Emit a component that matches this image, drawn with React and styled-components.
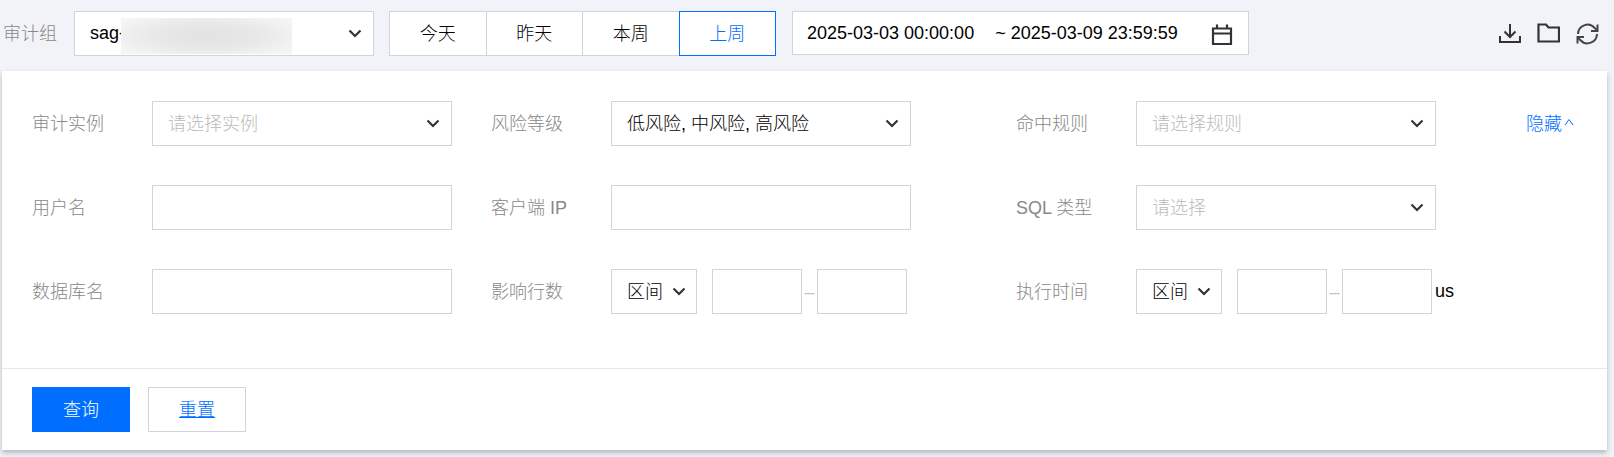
import React from 'react';
import styled, { createGlobalStyle } from 'styled-components';

const GlobalStyle = createGlobalStyle`
  html, body {
    margin: 0;
    background: #f2f3f8;
    font-family: "Liberation Sans", "Noto Sans CJK SC", sans-serif;
    font-size: 18px;
    color: #000;
  }
`;

const Page = styled.div`
  min-height: 100vh;
  padding-bottom: 7px;
  box-sizing: border-box;
  overflow: hidden;
`;

const TopBar = styled.div`
  display: flex;
  align-items: flex-start;
  height: 45px;
  padding: 11px 15px 15px 3px;
`;

const GroupLabel = styled.span`
  align-self: center;
  padding-bottom: 4px;
  color: #888;
  margin-right: 17px;
  font-weight: 300;
`;

const SelectBox = styled.div`
  position: relative;
  box-sizing: border-box;
  display: flex;
  align-items: center;
  justify-content: space-between;
  flex: none;
  width: ${p => p.$width}px;
  height: 45px;
  padding: 0 ${p => p.$pad || 11}px 0 15px;
  background: #fff;
  border: 1.5px solid #cfd5de;
  color: ${p => (p.$placeholder ? '#bbb' : '#000')};
  font-weight: 300;
`;

const SelectText = styled.span`
  padding-bottom: 4px;
`;

const Redaction = styled.span`
  position: absolute;
  left: 46px;
  top: 6px;
  width: 171px;
  height: 36px;
  background: radial-gradient(ellipse 60% 70% at 50% 50%, #e2e2e2 0%, #e8e8e8 50%, #f5f5f5 100%);
`;

const Tabs = styled.div`
  display: flex;
  margin-left: 16px;
`;

const Tab = styled.div`
  position: relative;
  box-sizing: border-box;
  width: 97.5px;
  height: 45px;
  margin-left: -1px;
  padding-bottom: 4px;
  display: flex;
  align-items: center;
  justify-content: center;
  background: #fff;
  border: 1.5px solid ${p => (p.$active ? '#006eff' : '#cfd5de')};
  color: ${p => (p.$active ? '#006eff' : '#000')};
  z-index: ${p => (p.$active ? 1 : 0)};
  font-weight: 300;
`;

const DateBox = styled.div`
  box-sizing: border-box;
  display: flex;
  align-items: center;
  width: 457px;
  height: 44px;
  margin-left: 16px;
  padding-left: 14px;
  background: #fff;
  border: 1.5px solid #cfd5de;
  white-space: pre;
`;

const DateEnd = styled.span`
  margin-left: 21px;
`;

const CalendarSlot = styled.span`
  display: flex;
  margin: 3px 0 0 33px;
`;

const Tools = styled.div`
  display: flex;
  align-items: flex-start;
  gap: 16px;
  margin: 12px 0 0 auto;
`;

const Card = styled.div`
  margin: 0 7px 0 2px;
  background: #fff;
  box-shadow: 0 3px 5px rgba(54, 58, 80, 0.32);
`;

const Form = styled.div`
  padding: 30px 0 54px 30px;
`;

const FormRow = styled.div`
  display: flex;
  align-items: center;
  height: 45px;
  margin-bottom: 39px;
  &:last-child {
    margin-bottom: 0;
  }
`;

const Field = styled.div`
  display: flex;
  align-items: center;
  flex: none;
  width: ${p => p.$width}px;
`;

const Label = styled.span`
  flex: none;
  width: 120px;
  padding-bottom: 4px;
  color: #888;
  font-weight: 300;
`;

const TextInput = styled.div`
  box-sizing: border-box;
  flex: none;
  width: ${p => p.$width || 300}px;
  height: 45px;
  background: #fff;
  border: 1.5px solid #cfd5de;
`;

const RangeSelect = styled(SelectBox)`
  margin-right: 15px;
`;

const RangeDash = styled.span`
  flex: none;
  width: 15px;
  padding-top: 1px;
  text-align: center;
  color: #c4c4c4;
`;

const Unit = styled.span`
  margin-left: 3px;
  font-weight: 300;
`;

const HideLink = styled.a`
  display: flex;
  align-items: center;
  gap: 2px;
  padding-bottom: 4px;
  color: #006eff;
  font-weight: 300;
`;

const Footer = styled.div`
  display: flex;
  gap: 18px;
  padding: 18px 30px;
  border-top: 1.5px solid #e5e8ee;
`;

const Button = styled.button`
  box-sizing: border-box;
  width: 98px;
  height: 45px;
  padding: 0 0 4px;
  font: inherit;
  font-weight: 300;
  background: ${p => (p.$primary ? '#006eff' : '#fff')};
  border: ${p => (p.$primary ? '0' : '1.5px solid #cfd5de')};
  color: ${p => (p.$primary ? '#fff' : '#006eff')};
  text-decoration: ${p => (p.$primary ? 'none' : 'underline')};
`;

const Chevron = () => (
  <svg width="14" height="9" viewBox="0 0 14 9" fill="none">
    <path d="M1.5 1.5 7 7l5.5-5.5" stroke="#333" strokeWidth="2.2" />
  </svg>
);

const CaretUp = () => (
  <svg width="10" height="8" viewBox="0 0 10 8" fill="none">
    <path d="M1 7 5 1.5 9 7" stroke="#006eff" strokeWidth="1" />
  </svg>
);

const CalendarIcon = () => (
  <svg width="22" height="22" viewBox="0 0 22 22" fill="none" stroke="#333" strokeWidth="2.2">
    <path d="M2 4.5h18V20H2z" />
    <path d="M2 9.5h18M6 0.5v4M16 0.5v4" />
  </svg>
);

const DownloadIcon = () => (
  <svg width="22" height="21" viewBox="0 0 22 21" fill="none" stroke="#333" strokeWidth="2">
    <path d="M11 1v13M5.5 8.5 11 14l5.5-5.5" />
    <path d="M1 13v6h20v-6" />
  </svg>
);

const FolderIcon = () => (
  <svg width="23" height="20" viewBox="0 0 23 20" fill="none" stroke="#333" strokeWidth="2.2">
    <path d="M1.5 1.5h7.5l2.5 3h10.5V18.5H1.5z" />
  </svg>
);

const RefreshIcon = () => (
  <svg width="23" height="22" viewBox="0 0 23 22" fill="none" stroke="#444" strokeWidth="2">
    <path d="M2 11a9.5 9.5 0 0 1 16.5-6.2L21 7" />
    <path d="M21.5 1.5V8H15" />
    <path d="M21 11a9.5 9.5 0 0 1-16.5 6.2L2 15" />
    <path d="M1.5 20.5V14H8" />
  </svg>
);

const Dropdown = ({ width, children, placeholder, pad }) => (
  <SelectBox $width={width} $placeholder={placeholder} $pad={pad}>
    <SelectText>{children}</SelectText>
    <Chevron />
  </SelectBox>
);

const Range = ({ selectWidth, unit }) => (
  <>
    <RangeSelect $width={selectWidth} $pad={10}>
      <SelectText>区间</SelectText>
      <Chevron />
    </RangeSelect>
    <TextInput $width={90} />
    <RangeDash>–</RangeDash>
    <TextInput $width={90} />
    {unit && <Unit>{unit}</Unit>}
  </>
);

export default function App() {
  return (
    <Page>
      <GlobalStyle />
      <TopBar>
        <GroupLabel>审计组</GroupLabel>
        <SelectBox $width={300}>
          <span>sag-</span>
          <Redaction />
          <Chevron />
        </SelectBox>
        <Tabs>
          <Tab>今天</Tab>
          <Tab>昨天</Tab>
          <Tab>本周</Tab>
          <Tab $active>上周</Tab>
        </Tabs>
        <DateBox>
          <span>2025-03-03 00:00:00</span>
          <DateEnd>~ 2025-03-09 23:59:59</DateEnd>
          <CalendarSlot><CalendarIcon /></CalendarSlot>
        </DateBox>
        <Tools>
          <DownloadIcon />
          <FolderIcon />
          <RefreshIcon />
        </Tools>
      </TopBar>
      <Card>
        <Form>
          <FormRow>
            <Field $width={459}>
              <Label>审计实例</Label>
              <Dropdown width={300} placeholder>请选择实例</Dropdown>
            </Field>
            <Field $width={525}>
              <Label>风险等级</Label>
              <Dropdown width={300}>低风险, 中风险, 高风险</Dropdown>
            </Field>
            <Field $width={510}>
              <Label>命中规则</Label>
              <Dropdown width={300} placeholder>请选择规则</Dropdown>
            </Field>
            <HideLink>隐藏<CaretUp /></HideLink>
          </FormRow>
          <FormRow>
            <Field $width={459}>
              <Label>用户名</Label>
              <TextInput />
            </Field>
            <Field $width={525}>
              <Label>客户端 IP</Label>
              <TextInput />
            </Field>
            <Field $width={510}>
              <Label>SQL 类型</Label>
              <Dropdown width={300} placeholder>请选择</Dropdown>
            </Field>
          </FormRow>
          <FormRow>
            <Field $width={459}>
              <Label>数据库名</Label>
              <TextInput />
            </Field>
            <Field $width={525}>
              <Label>影响行数</Label>
              <Range selectWidth={86} />
            </Field>
            <Field $width={510}>
              <Label>执行时间</Label>
              <Range selectWidth={86} unit="us" />
            </Field>
          </FormRow>
        </Form>
        <Footer>
          <Button $primary>查询</Button>
          <Button>重置</Button>
        </Footer>
      </Card>
    </Page>
  );
}
